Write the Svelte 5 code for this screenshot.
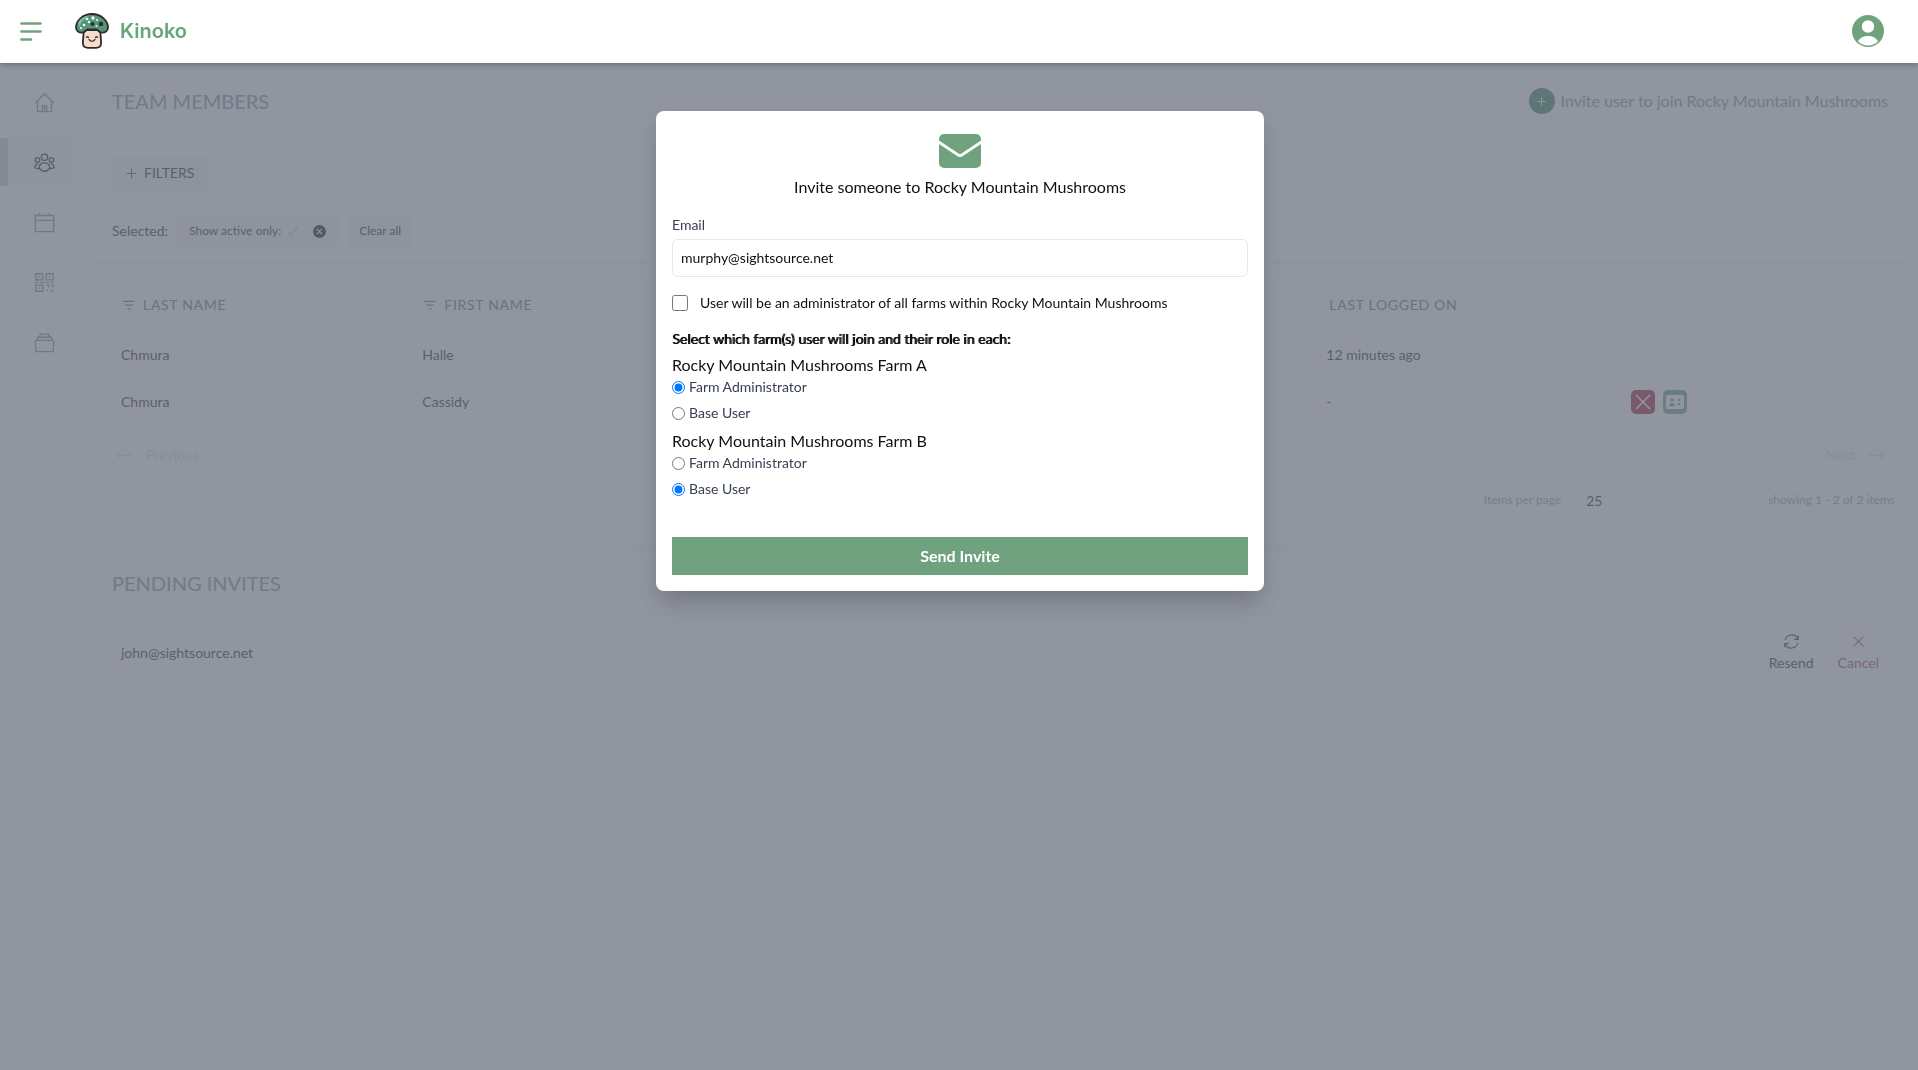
<script>
  const nav = ['Home', 'Team', 'Calendar', 'Codes', 'Archive'];
  const columns = [
    { label: 'LAST NAME', sortable: true },
    { label: 'FIRST NAME', sortable: true },
    { label: '' },
    { label: '' },
    { label: 'LAST LOGGED ON' },
    { label: '' }
  ];
  const members = [
    { last: 'Chmura', first: 'Halle', seen: '12 minutes ago', actions: false },
    { last: 'Chmura', first: 'Cassidy', seen: '-', actions: true }
  ];
  let farms = $state([
    { id: 'a', name: 'Rocky Mountain Mushrooms Farm A', role: 'admin' },
    { id: 'b', name: 'Rocky Mountain Mushrooms Farm B', role: 'base' }
  ]);
  let email = $state('murphy@sightsource.net');
  let allFarms = $state(false);
</script>

{#snippet cross()}
  <svg viewBox="0 0 24 24" class="line"><path d="M5 5l14 14M19 5L5 19" /></svg>
{/snippet}

<header class="topbar">
  <button class="menu" aria-label="Toggle menu">
    <svg viewBox="0 0 24 22"><path d="M2.5 3.5h19M2.5 11.5h19M2.5 19.5h9.5" /></svg>
  </button>
  <a class="brand" href="#home">
    <svg class="logo" viewBox="0 0 34 36" aria-hidden="true">
      <path d="M8.500 17C9 23 7.500 27 8 31c.3 3 2 3.800 5 3.800h8c3 0 4.700-.8 5-3.800.4-4-.9-8-.5-14z" fill="#f8ddcd" stroke="#2e2a2a" stroke-width="1.800" />
      <path d="M17 1C7.500 1 1 8 1 14.500 1 18 4 20 8 19.500c2-.3 3-3 5-3h8c2 0 3 2.700 5 3C30 20 33 18 33 14.500 33 8 26.500 1 17 1z" fill="#55957a" stroke="#2e2a2a" stroke-width="1.800" />
      <path d="M3 10C5.500 5 10 2.500 15 2.200 10 5 6 8 4.500 14z" fill="#7fbf9f" />
      <g fill="#fff"><circle cx="12" cy="6" r="1.300" /><circle cx="18" cy="5" r="1.700" /><circle cx="9" cy="12" r="1.300" /><circle cx="14" cy="9" r="1.200" /><circle cx="22" cy="7" r="1" /><circle cx="6" cy="15" r="1" /></g>
      <g fill="#26322d"><circle cx="17.500" cy="11" r="2" /><circle cx="26" cy="11" r="2.300" /></g>
      <circle cx="21.500" cy="13" r="1" fill="#dff3e8" />
      <path d="M11.500 24.500q1-1.700 2 0M20.500 24.500q1-1.700 2 0M14 26.500q3 3.500 6 0" fill="none" stroke="#2e2a2a" stroke-width="1.200" stroke-linecap="round" />
    </svg>
    <span>Kinoko</span>
  </a>
  <button class="account" aria-label="Account">
    <svg viewBox="0 0 32 32"><circle cx="16" cy="16" r="16" fill="#6ea37e" /><circle cx="16" cy="11.500" r="6.200" fill="#fff" /><path d="M6 26.500C8 22.500 12 21 16 21s8 1.500 10 5.500A14.300 14.300 0 0 1 16 30.500 14.300 14.300 0 0 1 6 26.500z" fill="#fff" /></svg>
  </button>
</header>

<div class="shell">
  <nav class="side" aria-label="Main">
    {#each nav as item, i}
      <a href="#{item.toLowerCase()}" class:active={i === 1} aria-label={item}>
        <svg viewBox="0 0 24 24" class="line">
          {#if i === 0}
            <path d="M1.500 12.500L12 2l10.500 10.500M4 10.500V22.500h16V10.500M9.500 22.500v-6.500h5v6.500M12 16v6" />
          {:else if i === 1}
            <rect x="8.500" y="2.500" width="7" height="7" rx="3" /><circle cx="4" cy="9" r="2.600" /><circle cx="20" cy="9" r="2.600" />
            <path d="M6 18.500c0-4 2.500-6 6-6s6 2 6 6c-1.500 2.500-3.500 3.500-6 3.500s-4.500-1-6-3.500zM5 13.500c-2.500 0-4 2-4 4.500 1.500.8 3 1 5 1M19 13.500c2.500 0 4 2 4 4.500-1.500.8-3 1-5 1" />
          {:else if i === 2}
            <path d="M1.500 4h21v18.500h-21zM1.500 9.500h21M6.500 1v3M17.500 1v3" />
          {:else if i === 3}
            <path d="M2 2h8v7H2zM14 2h8v7h-8zM5 5.500h2M17 5.500h2M2 15h8v7H2zM5 18.500h2M1 12h4M7 12h5M14 12h3M19 12h3M14 15h3v3M20 15h2v3M14 21h2M19 20l3 2.500" />
          {:else}
            <path d="M1.500 11.500c0-1 .6-1.700 1.500-2h18c.9.300 1.500 1 1.500 2l-.8 11H2.300zM3 9.500L4.500 6h15L21 9.500M6 6l1.500-3.500h9L18 6" />
          {/if}
        </svg>
      </a>
    {/each}
  </nav>

  <main>
    <div class="title-row">
      <h1>TEAM MEMBERS</h1>
      <button class="invite">
        <span class="plus"><svg viewBox="0 0 24 24" class="line"><path d="M12 5v14M5 12h14" /></svg></span>
        Invite user to join Rocky Mountain Mushrooms
      </button>
    </div>

    <section class="card filters">
      <button class="filter-btn"><svg viewBox="0 0 24 24" class="line"><path d="M12 3v18M3 12h18" /></svg>FILTERS</button>
      <div class="selected">
        <span>Selected:</span>
        <span class="chip">
          Show active only:
          <svg viewBox="0 0 24 24" class="line tick"><path d="M3 14l5 6L21 4" /></svg>
          <button class="remove" aria-label="Remove filter">{@render cross()}</button>
        </span>
        <button class="chip">Clear all</button>
      </div>
    </section>

    <section class="card members">
      <table>
        <thead>
          <tr>
            {#each columns as col}
              <th scope="col" class:plain={!col.sortable}>
                {#if col.sortable}<svg viewBox="0 0 16 12" class="line sort"><path d="M1 1.500h14M3.500 6h9M6 10.500h4" /></svg>{/if}{col.label}
              </th>
            {/each}
          </tr>
        </thead>
        <tbody>
          {#each members as m}
            <tr>
              <td>{m.last}</td><td>{m.first}</td><td></td><td></td><td>{m.seen}</td>
              <td>
                {#if m.actions}
                  <div class="actions">
                    <button class="deny" aria-label="Deactivate">{@render cross()}</button>
                    <button class="edit" aria-label="Edit roles">
                      <svg viewBox="0 0 24 24"><rect x="3" y="5" width="18" height="14" rx="2" fill="#fff" /><circle cx="9" cy="10" r="1.800" fill="#6ea37e" /><path d="M6 16c0-4 6-4 6 0zM14.500 9h3v2h-3zM14.500 13h3v2h-3z" fill="#6ea37e" /></svg>
                    </button>
                  </div>
                {/if}
              </td>
            </tr>
          {/each}
        </tbody>
      </table>
      <div class="pager">
        <button disabled><svg viewBox="0 0 20 12" class="line"><path d="M19 6H1M6 1L1 6l5 5" /></svg>Previous</button>
        <button disabled>Next<svg viewBox="0 0 20 12" class="line"><path d="M1 6h18M14 1l5 5-5 5" /></svg></button>
      </div>
      <div class="paging">
        <label for="per-page">Items per page</label>
        <input id="per-page" value="25" />
        <span>showing 1 - 2 of 2 items</span>
      </div>
    </section>

    <h2>PENDING INVITES</h2>
    <section class="card pending">
      <span>john@sightsource.net</span>
      <div class="pending-actions">
        <button>
          <svg viewBox="0 0 24 24" class="line"><path d="M3 10a9.500 9.500 0 0 1 18-1.500M21.500 3.500v5.500H16M21 14a9.500 9.500 0 0 1-18 1.500M2.500 20.500V15H8" /></svg>
          Resend
        </button>
        <button class="cancel">{@render cross()}Cancel</button>
      </div>
    </section>
  </main>
</div>

<div class="overlay">
  <form class="modal" aria-labelledby="modal-title" onsubmit={(e) => e.preventDefault()}>
    <svg class="envelope" viewBox="0 0 42 34" aria-hidden="true">
      <path d="M5 0h32a5 5 0 0 1 5 5v1.500L22.500 19.500a2.700 2.700 0 0 1-3 0L0 6.500V5a5 5 0 0 1 5-5z" />
      <path d="M0 10l18.500 12.200a4.500 4.500 0 0 0 5 0L42 10v19a5 5 0 0 1-5 5H5a5 5 0 0 1-5-5z" />
    </svg>
    <h3 id="modal-title">Invite someone to Rocky Mountain Mushrooms</h3>
    <label class="field-label" for="email">Email</label>
    <input id="email" class="email" type="email" bind:value={email} />
    <label class="check"><input type="checkbox" bind:checked={allFarms} />User will be an administrator of all farms within Rocky Mountain Mushrooms</label>
    <p class="prompt">Select which farm(s) user will join and their role in each:</p>
    {#each farms as farm}
      <fieldset>
        <legend>{farm.name}</legend>
        <label><input type="radio" name="farm-{farm.id}" value="admin" bind:group={farm.role} />Farm Administrator</label>
        <label><input type="radio" name="farm-{farm.id}" value="base" bind:group={farm.role} />Base User</label>
      </fieldset>
    {/each}
    <button class="send" type="submit">Send Invite</button>
  </form>
</div>

<style>
  :global(body) {
    margin: 0;
    background: #fff;
    color: #1f2937;
    font: 14px/20px Lato, "Liberation Sans", sans-serif;
  }
  :global(*) { box-sizing: border-box; }
  button { border: 0; padding: 0; background: none; color: inherit; font: inherit; cursor: pointer; }
  input { font: inherit; color: inherit; }
  h1, h2, h3, p { margin: 0; font-weight: 400; }
  svg { display: block; flex: none; }
  .line { fill: none; stroke: currentColor; stroke-width: 1.5; }

  .topbar {
    position: sticky;
    top: 0;
    z-index: 3;
    display: flex;
    align-items: center;
    height: 63px;
    padding: 0 34px 2px 18px;
    background: #fff;
    box-shadow: 0 1px 6px rgba(0, 0, 0, 0.3);
  }
  .menu svg { width: 26px; height: 22px; fill: none; stroke: #6ea37e; stroke-width: 2.600; stroke-linecap: round; }
  .brand { display: flex; align-items: center; gap: 11px; margin-left: 31px; color: #68a57b; font: 600 20px/28px Inter, Lato, sans-serif; text-decoration: none; }
  .logo { width: 34px; height: 36px; }
  .account { margin-left: auto; }
  .account svg { width: 32px; height: 32px; }

  .shell { display: flex; min-height: calc(100vh - 63px); }
  .side { flex: none; width: 79px; padding-top: 15px; border-right: 6px solid #fafafb; color: #848a96; }
  .side a { display: grid; place-items: center; height: 48px; margin-bottom: 12px; padding-left: 15px; color: inherit; }
  .side a svg { width: 21px; height: 21px; }
  .side a.active { padding-left: 7px; border-left: 8px solid #cbdcd6; background: #f5f6f8; color: #1f2937; }

  main { flex: 1; min-width: 0; padding: 0 14px 0 17px; background: #fdfdfe; }
  .title-row { display: flex; align-items: center; justify-content: space-between; height: 76px; padding: 0 16px; }
  h1, h2 { color: #8b8f99; font-size: 20px; line-height: 28px; }
  .invite { display: flex; align-items: center; gap: 6px; color: #6ea37e; font-size: 16px; line-height: 24px; }
  .plus { display: grid; place-items: center; width: 26px; height: 26px; border-radius: 50%; background: #3f8258; color: #fff; }
  .plus svg { width: 15px; height: 15px; }

  .card { background: #fff; box-shadow: 0 2px 8px rgba(0, 0, 0, 0.05); }
  .filters { padding: 16px 16px 14px; }
  .filter-btn { display: flex; align-items: center; gap: 6px; height: 36px; padding: 0 13px; background: #f6f7f8; }
  .filter-btn svg { width: 13px; height: 13px; }
  .selected { display: flex; align-items: center; gap: 9px; margin-top: 24px; }
  .chip { display: flex; align-items: center; gap: 6px; height: 32px; padding: 0 12px; background: #f6f7f8; font-size: 12px; line-height: 16px; }
  .tick { width: 12px; height: 12px; color: #6ea37e; }
  .remove { display: grid; place-items: center; width: 13px; height: 13px; margin-left: 8px; border-radius: 50%; background: #111; color: #fff; }
  .remove svg { width: 9px; height: 9px; stroke-width: 3; }

  .members { margin-top: 17px; padding-bottom: 26px; }
  table { width: 100%; border-spacing: 0; table-layout: fixed; }
  th { height: 53px; padding: 3px 26px 0; border: solid #f9fafb; border-width: 1px 5px 3px 0; color: #6b7280; font-weight: 400; letter-spacing: 0.05em; text-align: left; }
  th.plain { padding-left: 28px; }
  .sort { display: inline-block; width: 14px; height: 10px; margin-right: 7px; }
  td { height: 47px; padding: 0 25px; }
  .actions { display: flex; gap: 8px; padding-left: 3px; }
  .actions button { width: 24px; height: 24px; border-radius: 5px; color: #fff; }
  .actions svg { width: 24px; height: 24px; }
  .deny { background: #a3122a; }
  .edit { background: #6ea37e; }
  .pager { display: flex; justify-content: space-between; padding: 20px 19px 0 20px; }
  .pager button { display: flex; align-items: center; gap: 13px; color: #d9dbdf; }
  .pager svg { width: 17px; height: 10px; }
  .paging { display: flex; align-items: center; justify-content: flex-end; gap: 16px; padding: 16px 9px 0; color: #9ca0aa; font-size: 12px; }
  .paging input { width: 168px; height: 38px; padding: 0 8px; border: 1px solid #f6f7f8; background: #fff; color: #1f2937; font-size: 14px; }
  .paging span { margin-left: 7px; }

  h2 { padding: 24px 16px 20px; }
  .pending { display: flex; align-items: center; justify-content: space-between; height: 72px; padding: 0 25px; }
  .pending-actions { display: flex; gap: 24px; }
  .pending-actions button { display: flex; flex-direction: column; align-items: center; gap: 3px; }
  .pending-actions svg { width: 17px; height: 17px; }
  .pending-actions .cancel { color: #a4455c; }

  .overlay { position: fixed; inset: 0; z-index: 2; display: flex; align-items: flex-start; justify-content: center; padding: 111px 16px 16px 18px; background: rgba(107, 114, 128, 0.75); }
  .modal { width: 100%; max-width: 608px; padding: 23px 16px 16px; border-radius: 8px; background: #fff; box-shadow: 0 20px 25px -5px rgba(0, 0, 0, 0.1), 0 8px 20px rgba(0, 0, 0, 0.1); color: #111; }
  .envelope { width: 42px; height: 34px; margin: 0 auto 7px; fill: #70a27f; }
  h3 { font-size: 16px; line-height: 24px; text-align: center; }
  .field-label { display: block; margin-top: 16px; color: #374151; }
  .email { display: block; width: 100%; height: 38px; margin-top: 4px; padding: 0 8px 2px; border: 1px solid #e5e7eb; border-radius: 6px; background: #fff; }
  .check { display: flex; align-items: center; gap: 12px; margin-top: 16px; }
  .check input { width: 16px; height: 16px; margin: 0; }
  .prompt { margin: 16px 0 4px; text-shadow: 1px 0 currentColor; }
  fieldset { min-width: 0; margin: 0; padding: 0; border: 0; }
  legend { padding: 0; font-size: 16px; line-height: 24px; }
  fieldset label { display: flex; align-items: center; gap: 4px; margin-bottom: 6px; color: #374151; }
  fieldset input { width: 13px; height: 13px; margin: 0; accent-color: #0075ff; }
  .send { display: block; width: 100%; height: 38px; margin-top: 32px; background: #70a27f; color: #fff; font-size: 16px; font-weight: 700; }
</style>
